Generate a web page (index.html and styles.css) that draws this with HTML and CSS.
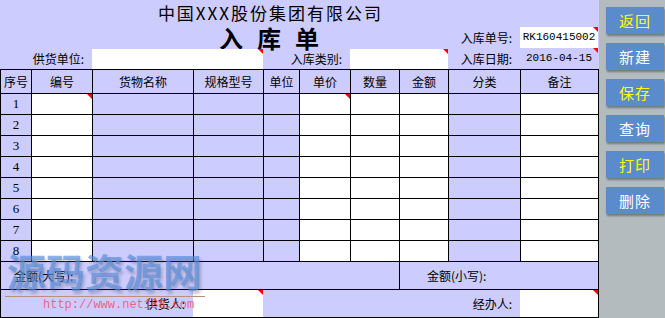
FILE: index.html
```html
<!DOCTYPE html>
<html lang="zh-CN">
<head>
    <meta charset="UTF-8">
    <title>入库单</title>
    <link rel="stylesheet" href="styles.css">
</head>
<body>
<div class="app">
    <div class="sheet">
        <!-- 表头 -->
        <div class="head">
            <div class="company">中国XXX股份集团有限公司</div>
            <div class="doc-title">入库单</div>
            <div class="label">入库单号:</div>
            <div class="field flag mono">RK160415002</div>
            <div class="label">供货单位:</div>
            <div class="field flag low"></div>
            <div class="label">入库类别:</div>
            <div class="field flag low"></div>
            <div class="label">入库日期:</div>
            <div class="date flag mono">2016-04-15</div>
        </div>

        <!-- 明细 -->
        <div class="grid">
            <div class="c">序号</div><div class="c">编号</div><div class="c">货物名称</div><div class="c">规格型号</div><div class="c">单位</div>
            <div class="c">单价</div><div class="c">数量</div><div class="c">金额</div><div class="c">分类</div><div class="c">备注</div>

            <div class="c num">1</div><div class="c w flag"></div><div class="c"></div><div class="c"></div><div class="c"></div>
            <div class="c w flag"></div><div class="c w"></div><div class="c w"></div><div class="c"></div><div class="c w"></div>

            <div class="c num">2</div><div class="c w"></div><div class="c"></div><div class="c"></div><div class="c"></div>
            <div class="c w"></div><div class="c w"></div><div class="c w"></div><div class="c"></div><div class="c w"></div>

            <div class="c num">3</div><div class="c w"></div><div class="c"></div><div class="c"></div><div class="c"></div>
            <div class="c w"></div><div class="c w"></div><div class="c w"></div><div class="c"></div><div class="c w"></div>

            <div class="c num">4</div><div class="c w"></div><div class="c"></div><div class="c"></div><div class="c"></div>
            <div class="c w"></div><div class="c w"></div><div class="c w"></div><div class="c"></div><div class="c w"></div>

            <div class="c num">5</div><div class="c w"></div><div class="c"></div><div class="c"></div><div class="c"></div>
            <div class="c w"></div><div class="c w"></div><div class="c w"></div><div class="c"></div><div class="c w"></div>

            <div class="c num">6</div><div class="c w"></div><div class="c"></div><div class="c"></div><div class="c"></div>
            <div class="c w"></div><div class="c w"></div><div class="c w"></div><div class="c"></div><div class="c w"></div>

            <div class="c num">7</div><div class="c w"></div><div class="c"></div><div class="c"></div><div class="c"></div>
            <div class="c w"></div><div class="c w"></div><div class="c w"></div><div class="c"></div><div class="c w"></div>

            <div class="c num">8</div><div class="c w"></div><div class="c"></div><div class="c"></div><div class="c"></div>
            <div class="c w"></div><div class="c w"></div><div class="c w"></div><div class="c"></div><div class="c w"></div>

            <div class="c total-big">金额(大写):</div>
            <div class="c total-small">金额(小写):</div>

            <div class="sign">
                <div class="sign-label">供货人:</div>
                <div class="sign-field flag"></div>
                <div class="sign-gap">经办人:</div>
                <div class="sign-field wide flag"></div>
            </div>
        </div>

        <!-- 水印 -->
        <div class="watermark">源码资源网</div>
        <div class="wm-line"></div>
        <div class="wm-url">http://www.net188.com</div>
    </div>

    <div class="side">
        <button class="btn hl">返回</button>
        <button class="btn">新建</button>
        <button class="btn hl">保存</button>
        <button class="btn">查询</button>
        <button class="btn hl">打印</button>
        <button class="btn">删除</button>
    </div>
</div>
</body>
</html>
```

FILE: styles.css
```css
* {
    margin: 0;
    padding: 0;
    box-sizing: border-box;
}

body {
    width: 665px;
    height: 318px;
    overflow: hidden;
    font-family: "Noto Sans CJK SC", "Noto Sans", sans-serif;
    font-size: 12px;
    color: #000;
    background: #b3bbbe;
}

.app {
    display: flex;
    height: 318px;
}

.sheet {
    width: 599px;
    background: #ccccff;
    position: relative;
}

/* Header */
.head {
    display: grid;
    grid-template-columns: 92px 171px 87px 98px 72px 79px;
    grid-template-rows: 27px 21px 21px;
}

.company {
    grid-column: 1 / -1;
    text-align: center;
    padding-right: 58px;
    font-size: 17px;
    letter-spacing: 2px;
    line-height: 25px;
}

.doc-title {
    grid-column: 1 / 5;
    padding-left: 104px;
    text-align: center;
    font-size: 24px;
    font-weight: bold;
    letter-spacing: 14px;
    line-height: 21px;
}

.label {
    text-align: right;
    padding-right: 8px;
    line-height: 21px;
}

.field {
    background: #fff;
    position: relative;
}

.field.low {
    margin-top: 1px;
}

.mono {
    font-family: "Liberation Mono", monospace;
    font-size: 11px;
    line-height: 21px;
    text-align: center;
    width: 78px;
}

.date {
    position: relative;
}

.flag::after {
    content: "";
    position: absolute;
    top: 0;
    right: 0;
    border-top: 5px solid #f00;
    border-left: 5px solid transparent;
}

/* Detail grid */
.grid {
    display: grid;
    grid-template-columns: 30px 60px 100px 69px 35px 50px 48px 48px 71px 77px;
    grid-template-rows: 23px repeat(8, 20px) 27px 27px;
    gap: 1px;
    padding: 1px;
    background: #000;
    width: 599px;
}

.c {
    background: #ccccff;
    display: flex;
    align-items: center;
    justify-content: center;
    position: relative;
}

.c.w {
    background: #fff;
}

.c.num {
    font-family: "Liberation Serif", serif;
    font-size: 13px;
}

.total-big {
    grid-column: 1 / 8;
    justify-content: flex-start;
    padding-left: 13px;
}

.total-small {
    grid-column: 8 / 11;
    justify-content: flex-start;
    padding-left: 27px;
}

.sign {
    grid-column: 1 / -1;
    display: flex;
    background: #ccccff;
    line-height: 27px;
}

.sign-label {
    width: 192px;
    text-align: right;
    padding-right: 8px;
}

.sign-field {
    width: 70px;
    background: #fff;
    position: relative;
}

.sign-field.wide {
    width: 78px;
}

.sign-gap {
    width: 257px;
    text-align: right;
    padding-right: 8px;
}

/* Watermark */
.watermark {
    position: absolute;
    left: 7px;
    top: 244px;
    font-size: 39px;
    font-weight: bold;
    line-height: 52px;
    color: rgba(85, 140, 215, 0.68);
    text-shadow: 2px 3px 3px rgba(70, 70, 90, 0.3);
    white-space: nowrap;
}

.wm-line {
    position: absolute;
    left: 5px;
    top: 296px;
    width: 200px;
    height: 1px;
    background: #b89080;
}

.wm-url {
    position: absolute;
    left: 43px;
    top: 298px;
    font-family: "Liberation Mono", monospace;
    font-size: 12px;
    line-height: 14px;
    color: rgba(240, 80, 100, 0.85);
}

/* Side buttons */
.side {
    flex: 1;
    padding: 7px 0 0 7px;
    display: flex;
    flex-direction: column;
    gap: 9px;
}

.btn {
    width: 58px;
    height: 27px;
    border: none;
    background: #5a8bcb;
    color: #fff;
    font-family: "Noto Sans CJK SC", sans-serif;
    font-size: 15px;
    letter-spacing: 1px;
    box-shadow: 1px 2px 2px rgba(0, 0, 0, 0.35);
    cursor: pointer;
}

.btn.hl {
    color: #ff0;
}
```
